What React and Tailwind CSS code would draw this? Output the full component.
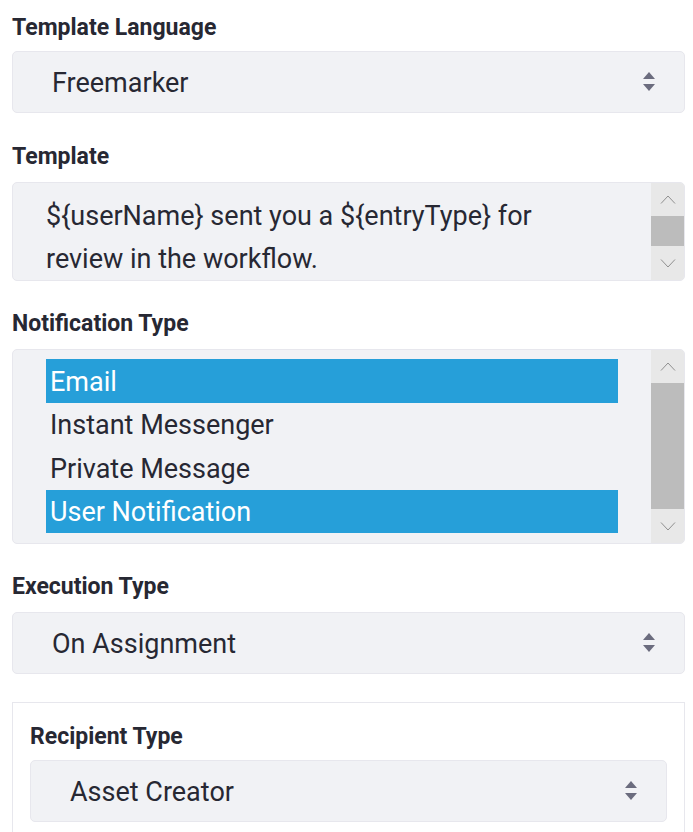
import React from 'react';

const FONT = { fontFamily: 'Roboto, "Noto Sans", "Liberation Sans", sans-serif' };

function SelectArrows() {
  return (
    <svg width="14" height="20" viewBox="0 0 14 20" className="shrink-0">
      <path d="M7 0 L13 7 L1 7 Z" fill="#6b6c7e" />
      <path d="M1 12 L13 12 L7 19 Z" fill="#6b6c7e" />
    </svg>
  );
}

function Chevron({ up }) {
  return (
    <svg width="16" height="9" viewBox="0 0 16 9">
      <path d={up ? 'M1 8.5 L8 1 L15 8.5' : 'M1 0.5 L8 8 L15 0.5'} fill="none" stroke="#8f8f8f" strokeWidth="1" />
    </svg>
  );
}

function Label({ children, className = '' }) {
  return (
    <label className={`block text-[23px] leading-[28px] font-bold text-[#272833] ${className}`}>
      {children}
    </label>
  );
}

function Select({ value }) {
  return (
    <div className="h-[62px] flex items-center justify-between rounded-[5px] border border-[#e7e7ed] bg-[#f1f2f5] pl-[39px] pr-[28px]">
      <span className="text-[27px] text-[#272833] pt-[3px]">{value}</span>
      <SelectArrows />
    </div>
  );
}

function Scrollbar({ thumbHeight, upH, downH }) {
  return (
    <div className="w-[33px] flex flex-col bg-[#e8e8e8]">
      <div className="flex items-center justify-center" style={{ height: upH }}>
        <Chevron up />
      </div>
      <div className="bg-[#bcbcbc]" style={{ height: thumbHeight }} />
      <div className="flex-1 flex items-center justify-center" style={{ minHeight: downH }}>
        <Chevron />
      </div>
    </div>
  );
}

const OPTIONS = [
  { label: 'Email', selected: true },
  { label: 'Instant Messenger', selected: false },
  { label: 'Private Message', selected: false },
  { label: 'User Notification', selected: true },
];

export default function App() {
  return (
    <div className="bg-white min-h-[832px] pl-[12px] pr-[8px] pt-[14px]" style={FONT}>
      <div className="mb-[30px]">
        <Label className="mb-[9px]">Template Language</Label>
        <Select value="Freemarker" />
      </div>

      <div className="mb-[29px]">
        <Label className="mb-[11px]">Template</Label>
        <div className="h-[99px] flex rounded-[5px] border border-[#e7e7ed] bg-[#f1f2f5] overflow-hidden">
          <div className="flex-1 pl-[33px] pt-[12px] text-[27px] leading-[43px] text-[#272833]">
            {'${userName} sent you a ${entryType} for'}
            <br />
            review in the workflow.
          </div>
          <Scrollbar upH={33} thumbHeight={30} downH={34} />
        </div>
      </div>

      <div className="mb-[29px]">
        <Label className="mb-[11px]">Notification Type</Label>
        <div className="h-[195px] flex rounded-[5px] border border-[#e7e7ed] bg-[#f1f2f5] overflow-hidden">
          <div className="flex-1 pt-[9px] pl-[33px] pr-[33px]">
            {OPTIONS.map((o) => (
              <div
                key={o.label}
                className={`h-[43.5px] flex items-center pl-[4px] pt-[2px] text-[27px] ${
                  o.selected ? 'bg-[#269fd9] text-white' : 'text-[#272833]'
                }`}
              >
                {o.label}
              </div>
            ))}
          </div>
          <Scrollbar upH={33} thumbHeight={126} downH={34} />
        </div>
      </div>

      <div className="mb-[28px]">
        <Label className="mb-[11px]">Execution Type</Label>
        <Select value="On Assignment" />
      </div>

      <div className="border border-[#e7e7ed] border-b-0 px-[17px] pt-[20px] pb-[20px]">
        <Label className="mb-[9px]">Recipient Type</Label>
        <Select value="Asset Creator" />
      </div>
    </div>
  );
}
